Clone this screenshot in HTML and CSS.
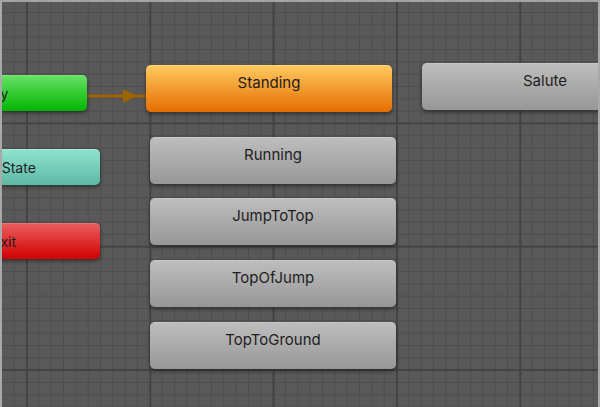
FILE: index.html
```html
<!DOCTYPE html>
<html>
<head>
<meta charset="utf-8">
<link rel="stylesheet" href="styles.css">
</head>
<body>
<div class="window">
  <div class="canvas">
    <svg class="grid" width="600" height="407" viewBox="0 0 600 407">
      <defs>
        <pattern id="minor" patternUnits="userSpaceOnUse" x="1.33" y="-0.33" width="12.333" height="12.333">
          <rect x="0" y="0" width="1" height="12.333" fill="#4e4e4e"/>
          <rect x="0" y="0" width="12.333" height="1" fill="#4e4e4e"/>
        </pattern>
        <pattern id="major" patternUnits="userSpaceOnUse" x="26" y="-1" width="123.333" height="123.333">
          <rect x="0" y="0" width="2" height="123.333" fill="#444444"/>
          <rect x="0" y="0" width="123.333" height="2" fill="#444444"/>
        </pattern>
      </defs>
      <rect width="600" height="407" fill="#595959"/>
      <rect width="600" height="407" fill="url(#minor)"/>
      <rect width="600" height="407" fill="url(#major)"/>
    </svg>

    <svg class="link" width="600" height="407" viewBox="0 0 600 407">
      <line x1="86" y1="96" x2="147" y2="96" stroke="#9d6400" stroke-width="3"/>
      <polygon points="123,89 137,96 123,103" fill="#9d6400"/>
    </svg>

    <div class="node small entry">Entry</div>
    <div class="node small any">Any State</div>
    <div class="node small exit">Exit</div>

    <div class="node state standing">Standing</div>
    <div class="node state salute">Salute</div>
    <div class="node state running">Running</div>
    <div class="node state jump">JumpToTop</div>
    <div class="node state topof">TopOfJump</div>
    <div class="node state ground">TopToGround</div>
  </div>
</div>
</body>
</html>
```

FILE: styles.css
```css
html, body {
  margin: 0;
  padding: 0;
  background: #595959;
}

.window {
  width: 600px;
  height: 407px;
  box-sizing: border-box;
  border-left: 2px solid #a9a9a9;
  border-right: 2px solid #a9a9a9;
  border-top: 2px solid #a3a3a3;
  position: relative;
  overflow: hidden;
}

.window::after {
  content: "";
  position: absolute;
  top: -2px;
  left: 485px;
  right: 0;
  height: 2px;
  background: #dedede;
}

.canvas {
  position: absolute;
  left: -2px;
  top: -2px;
  width: 600px;
  height: 407px;
  overflow: hidden;
}

.grid, .link {
  position: absolute;
  left: 0;
  top: 0;
}

.node {
  position: absolute;
  box-sizing: border-box;
  font-family: "Inter", "Noto Sans", sans-serif;
  color: #1e1e1e;
  text-align: center;
  border-radius: 5px;
  box-shadow: 0 2px 4px rgba(0, 0, 0, 0.45);
  white-space: nowrap;
}

.small {
  width: 192px;
  height: 36px;
  font-size: 14px;
  line-height: 36px;
}

.state {
  width: 246px;
  height: 47px;
  font-size: 15px;
  line-height: 18px;
  padding-top: 8px;
  background: linear-gradient(#bdbdbd, #979797);
  border-top: 1px solid #c8c8c8;
}

.entry {
  left: -105px;
  top: 75px;
  background: linear-gradient(#66e065, #00b500);
  border-top: 1px solid #7fe87c;
}

.any {
  left: -92px;
  top: 149px;
  background: linear-gradient(#8ee2cc, #5db8a6);
  border-top: 1px solid #a3ead7;
}

.exit {
  left: -92px;
  top: 223px;
  background: linear-gradient(#ea5d5d, #d20000);
  border-top: 1px solid #f07474;
}

.standing {
  left: 146px;
  top: 65px;
  background: linear-gradient(#ffc85e, #e56d00);
  border-top: 1px solid #ffd37a;
}

.salute {
  left: 422px;
  top: 63px;
}

.running { left: 150px; top: 137px; }
.jump    { left: 150px; top: 198px; }
.topof   { left: 150px; top: 260px; }
.ground  { left: 150px; top: 322px; }
```
